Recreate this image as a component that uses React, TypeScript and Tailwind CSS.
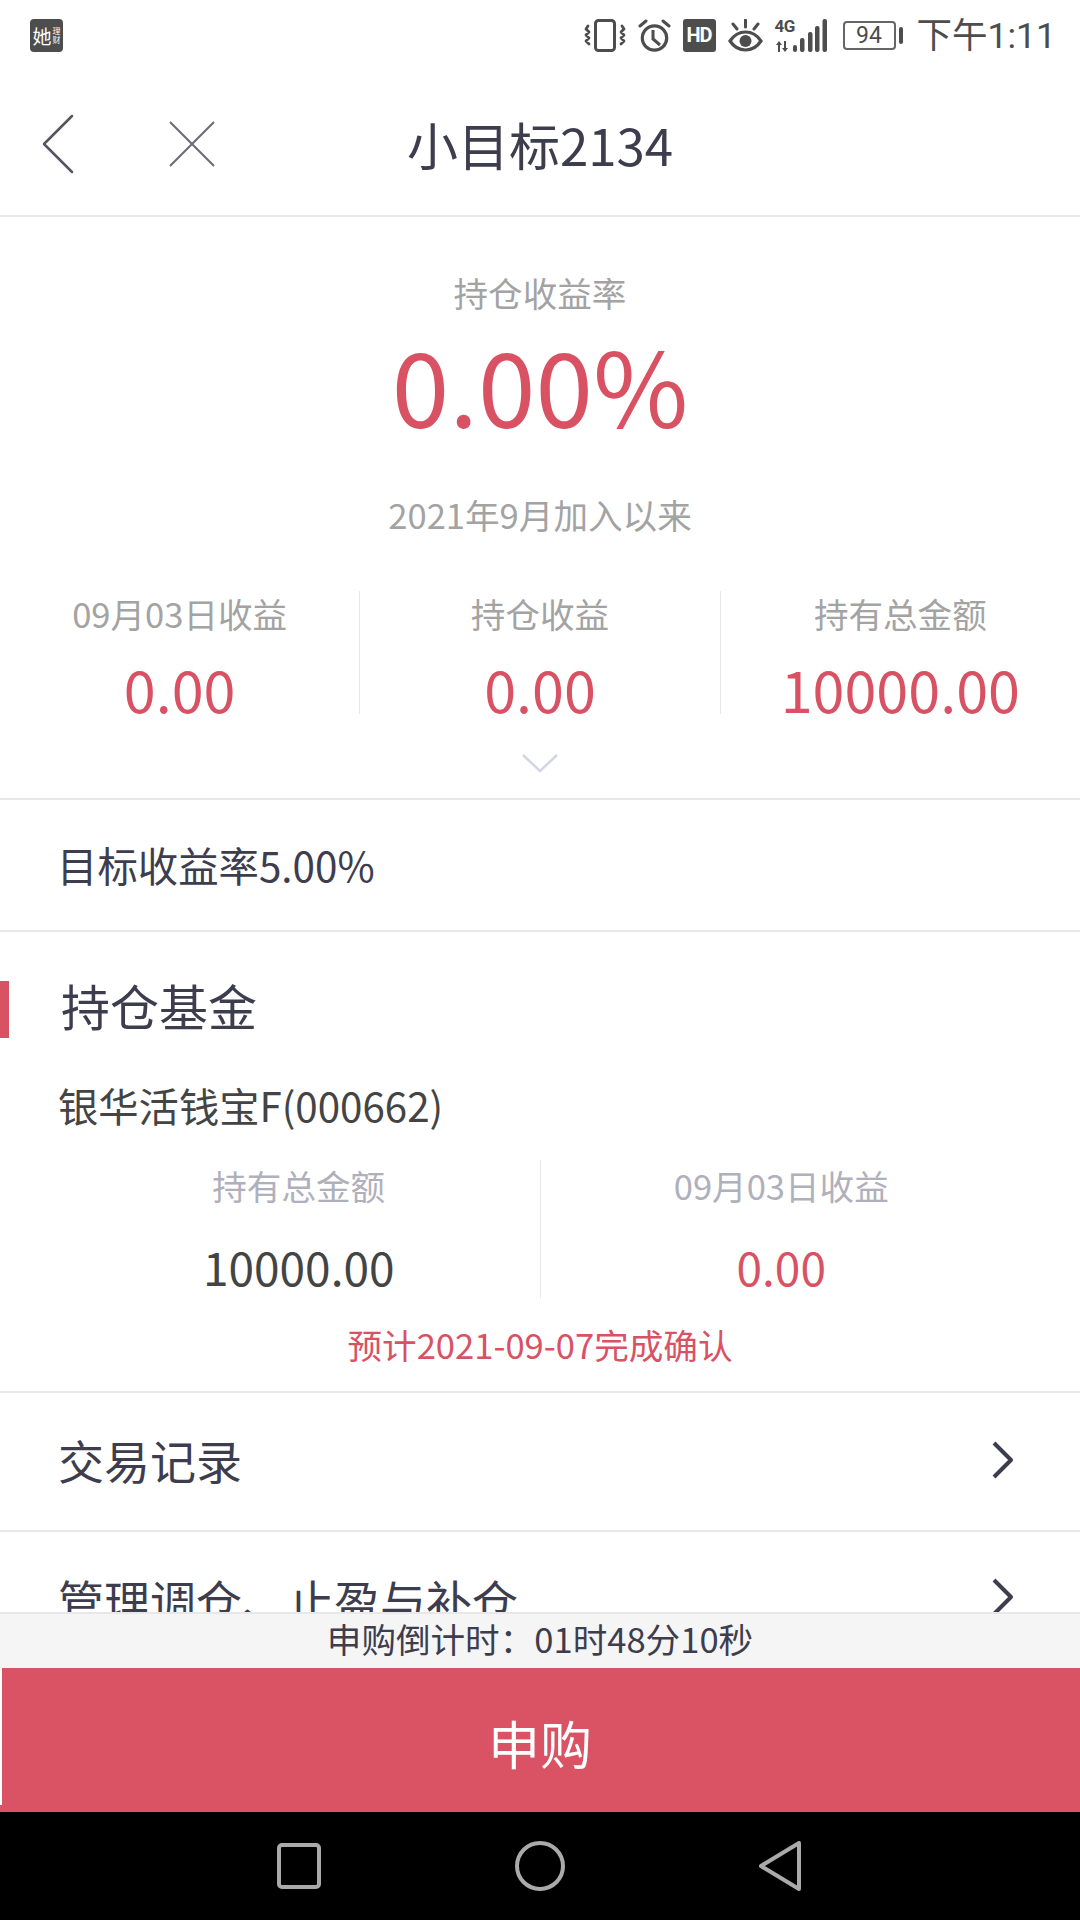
const SANS = "font-['Noto_Sans_CJK_SC','Noto_Sans',sans-serif]";

const Divider = () => <div className="h-[2px] shrink-0 bg-[#e8e8ea]" />;

const RowArrow = ({ className = "" }: { className?: string }) => (
  <svg className={`mr-[7px] ${className}`} width="24" height="38" viewBox="0 0 24 38" fill="none" stroke="#3d3d4e" strokeWidth="4" strokeLinejoin="round">
    <path d="M3 2l17 17L3 36" />
  </svg>
);

const StatusIcons = () => (
  <div className="flex items-center gap-3 text-[#4d4d4d]">
    {/* vibrate */}
    <svg width="42" height="33" viewBox="0 0 42 33" fill="none" stroke="currentColor" strokeWidth="3">
      <rect x="11.5" y="1.5" width="19" height="30" rx="3" />
      <path d="M4 7l-2 3 3 3-3 3 3 3-3 3 3 3M38 7l2 3-3 3 3 3-3 3 3 3-3 3" strokeWidth="2.8" strokeLinecap="round" strokeLinejoin="round" />
    </svg>
    {/* alarm */}
    <svg width="33" height="33" viewBox="0 0 33 33" fill="none" stroke="currentColor" strokeWidth="3.2">
      <circle cx="16.5" cy="19" r="12.2" />
      <path d="M15 11v9l7 6" strokeWidth="3" />
      <path d="M2 7l6-5M31 7l-6-5" strokeWidth="3" strokeLinecap="round" />
    </svg>
    <div className="flex h-[33px] w-[33px] items-center justify-center rounded-[3px] bg-[#4d4d4d] font-['Roboto',sans-serif] text-[20px] leading-none font-bold tracking-[-1px] text-white">
      HD
    </div>
    {/* eye comfort */}
    <svg width="35" height="33" viewBox="0 0 35 33" fill="none" stroke="currentColor" strokeWidth="3.2">
      <path d="M2 22c4-6 9-9 15.500-9S29 16 33 22c-4 6-9 9-15.500 9S6 28 2 22z" />
      <circle cx="17.500" cy="22" r="6" fill="currentColor" stroke="none" />
      <path d="M17.500 1v7M5 5l4 5M30 5l-4 5" strokeWidth="3" strokeLinecap="round" />
    </svg>
    {/* signal */}
    <div className="relative h-[33px] w-[52px]">
      <span className="absolute top-[-3px] left-0 font-['Roboto',sans-serif] text-[17px] leading-[20px] font-bold tracking-[-0.5px]">4G</span>
      <svg className="absolute inset-0" width="52" height="33" viewBox="0 0 52 33" fill="currentColor">
        <path d="M4 22l3 4H5v7H3v-7H1zM10 33l-3-4h2v-7h2v7h2z" />
        <rect x="18" y="26" width="4" height="7" rx="2" />
        <rect x="25" y="19" width="4.500" height="14" rx="2" />
        <rect x="33" y="13" width="4.500" height="20" rx="2" />
        <rect x="40" y="7" width="4.500" height="26" rx="2" />
        <rect x="47.500" y="0" width="4.500" height="33" rx="2" />
      </svg>
    </div>
    {/* battery */}
    <div className="ml-[4px] flex items-center gap-[3px]">
      <div className="flex h-[29px] w-[53px] items-center justify-center rounded-[4px] border-2 border-[#666] font-['Roboto',sans-serif] text-[23px] leading-none">
        94
      </div>
      <div className="h-[17px] w-[4px] rounded-[2px] bg-[#4d4d4d]" />
    </div>
    <span className="mt-[4px] ml-[2px] font-['Roboto','Noto_Sans_CJK_SC',sans-serif] text-[35.5px] leading-none">下午1:11</span>
  </div>
);

const Stat = ({ label, value }: { label: string; value: string }) => (
  <div className="flex flex-1 flex-col items-center border-l border-[#e8e8ea] first:border-l-0">
    <span className="text-[34.6px] leading-[44px] text-[#a3a3a3]">{label}</span>
    <span className="mt-[28px] text-[57.5px] leading-[50px] text-[#d85264]">{value}</span>
  </div>
);

export default function App() {
  return (
    <div className={`${SANS} flex h-[1920px] w-[1080px] flex-col overflow-hidden bg-white text-[#3d3d4e]`}>
      {/* status bar */}
      <div className="flex h-[70px] shrink-0 items-center justify-between pr-[24px] pl-[30px]">
        <div className="flex h-[33px] w-[33px] items-center justify-center gap-[1px] rounded-[4px] bg-[#4d4d4d] text-white">
          <span className="text-[19px] leading-none">她</span>
          <span className="flex flex-col text-[8px] leading-[9px]">
            <span>理</span>
            <span>财</span>
          </span>
        </div>
        <StatusIcons />
      </div>

      {/* title bar */}
      <div className="relative flex h-[145px] shrink-0 items-center justify-center pt-[4px]">
        <svg className="absolute top-[44px] left-[42px]" width="32" height="60" viewBox="0 0 32 60" fill="none" stroke="#55555f" strokeWidth="2.5" strokeLinecap="round" strokeLinejoin="round">
          <path d="M30 2L2 30l28 28" />
        </svg>
        <svg className="absolute top-[51px] left-[169px]" width="46" height="46" viewBox="0 0 46 46" fill="none" stroke="#6a6a72" strokeWidth="2">
          <path d="M1 1l44 44M45 1L1 45" />
        </svg>
        <span className="text-[51px] leading-none">小目标2134</span>
      </div>
      <Divider />

      {/* holding yield */}
      <div className="flex flex-col items-center">
        <span className="mt-[50px] text-[34.6px] leading-[50px] text-[#a3a3a3]">持仓收益率</span>
        <span className="mt-[6px] text-[103.5px] leading-[120px] text-[#d85264]">0.00%</span>
        <span className="mt-[46px] text-[34.6px] leading-[50px] text-[#a3a3a3]">2021年9月加入以来</span>
      </div>

      <div className="mt-[52px] flex h-[123px] shrink-0">
        <Stat label="09月03日收益" value="0.00" />
        <Stat label="持仓收益" value="0.00" />
        <Stat label="持有总金额" value="10000.00" />
      </div>

      <svg className="mx-auto mt-[39px] shrink-0" width="36" height="20" viewBox="0 0 36 20" fill="none" stroke="#d4d6e4" strokeWidth="2.5">
        <path d="M1 2l17 16L35 2" />
      </svg>
      <div className="mt-[25px]" />
      <Divider />

      <div className="flex h-[130px] shrink-0 items-center pl-[57px] text-[40.4px]">目标收益率5.00%</div>
      <Divider />

      {/* funds */}
      <div className="mt-[49px] flex h-[57px] shrink-0 items-center">
        <div className="h-[57px] w-[9px] bg-[#d85264]" />
        <span className="mb-[10px] ml-[52px] text-[49px] leading-none">持仓基金</span>
      </div>
      <div className="mt-[37px] pl-[58px] text-[40.3px] leading-[60px] text-[#444]">银华活钱宝F(000662)</div>

      <div className="mt-[25px] flex h-[138px] shrink-0 px-[58px]">
        <div className="flex flex-1 flex-col items-center">
          <span className="text-[34.6px] leading-[50px] text-[#b0b0bc]">持有总金额</span>
          <span className="mt-[31px] text-[46px] leading-[50px] text-[#444]">10000.00</span>
        </div>
        <div className="flex flex-1 flex-col items-center border-l border-[#e8e8ea]">
          <span className="text-[34.6px] leading-[50px] text-[#b0b0bc]">09月03日收益</span>
          <span className="mt-[31px] text-[46px] leading-[50px] text-[#d85264]">0.00</span>
        </div>
      </div>
      <div className="mt-[21px] text-center text-[34.6px] leading-[50px] text-[#d85264]">预计2021-09-07完成确认</div>
      <div className="mt-[22px]" />
      <Divider />

      <div className="flex h-[137px] shrink-0 items-center justify-between px-[58px] pb-[4px] text-[46px]">
        <span>交易记录</span>
        <RowArrow />
      </div>
      <Divider />

      {/* list continues under the fixed footer */}
      <div className="relative flex-1">
        <div className="flex h-[136px] items-center justify-between px-[58px] pb-[2px] text-[46px]">
          <span>管理调仓、止盈与补仓</span>
          <RowArrow className="mb-[4px]" />
        </div>
        <div className="absolute inset-x-0 top-[80px] bottom-0 flex flex-col bg-white">
          <div className="flex h-[56px] shrink-0 items-center justify-center border-t-2 border-[#e8e8ea] bg-[#f5f5f5] pb-[6px] text-[34.6px] leading-none">
            申购倒计时：01时48分10秒
          </div>
          <div className="relative flex h-[144px] shrink-0 items-center justify-center bg-[#da5364] pt-[6px] text-[52px] leading-none text-white">
            <div className="absolute top-0 left-0 h-[137px] w-[2px] bg-white" />
            申购
          </div>
          <div className="flex flex-1 items-center justify-center bg-black">
            <div className="mr-[2px] flex items-center gap-[194px]">
              <svg width="44" height="46" viewBox="0 0 44 46" fill="none" stroke="#aaa" strokeWidth="4">
                <rect x="2" y="2" width="40" height="42" rx="3" />
              </svg>
              <svg width="50" height="50" viewBox="0 0 50 50" fill="none" stroke="#aaa" strokeWidth="4">
                <circle cx="25" cy="25" r="23" />
              </svg>
              <svg width="42" height="50" viewBox="0 0 42 50" fill="none" stroke="#aaa" strokeWidth="4" strokeLinejoin="round">
                <path d="M40 2v46L2 25z" />
              </svg>
            </div>
          </div>
        </div>
      </div>
    </div>
  );
}
